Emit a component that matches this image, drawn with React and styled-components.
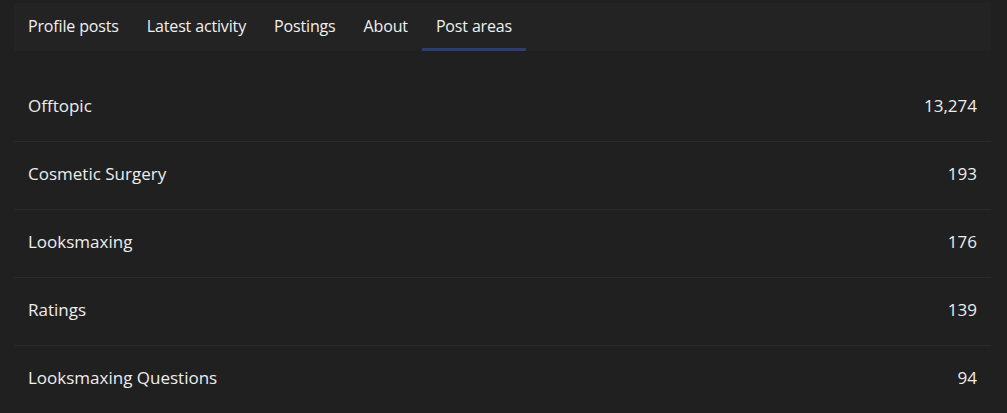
import React from "react";
import styled, { createGlobalStyle } from "styled-components";

const tabs = ["Profile posts", "Latest activity", "Postings", "About", "Post areas"];

const areas = [
  { name: "Offtopic", count: "13,274" },
  { name: "Cosmetic Surgery", count: "193" },
  { name: "Looksmaxing", count: "176" },
  { name: "Ratings", count: "139" },
  { name: "Looksmaxing Questions", count: "94" },
];

export default function App() {
  return (
    <>
      <GlobalStyle />
      <Page>
        <TabBar>
          {tabs.map((t) => (
            <Tab key={t} $active={t === "Post areas"}>
              {t}
            </Tab>
          ))}
        </TabBar>
        <AreaList>
          {areas.map((a) => (
            <AreaRow key={a.name}>
              <span>{a.name}</span>
              <span>{a.count}</span>
            </AreaRow>
          ))}
        </AreaList>
      </Page>
    </>
  );
}

const GlobalStyle = createGlobalStyle`
  html, body {
    margin: 0;
    background: #202020;
    font-family: "Open Sans", "Noto Sans", sans-serif;
    color: #ededed;
  }
`;

const Page = styled.div`
  padding: 3px 16px 0 14px;
`;

const TabBar = styled.div`
  display: flex;
  height: 48px;
  background-color: #232323;
`;

const Tab = styled.div`
  display: flex;
  align-items: center;
  padding: 0 14px;
  font-size: 16px;
  letter-spacing: -0.15px;
  color: #f0f0f0;
  border-bottom: 3px solid ${(p) => (p.$active ? "#2b3d73" : "transparent")};
  cursor: pointer;
`;

const AreaList = styled.div`
  margin-top: 23px;
`;

const AreaRow = styled.div`
  display: flex;
  justify-content: space-between;
  align-items: center;
  height: 62px;
  padding: 0 14px 5px;
  font-size: 17px;
  border-bottom: 1px solid #2a2a2a;
  &:last-child {
    border-bottom: none;
  }
`;
